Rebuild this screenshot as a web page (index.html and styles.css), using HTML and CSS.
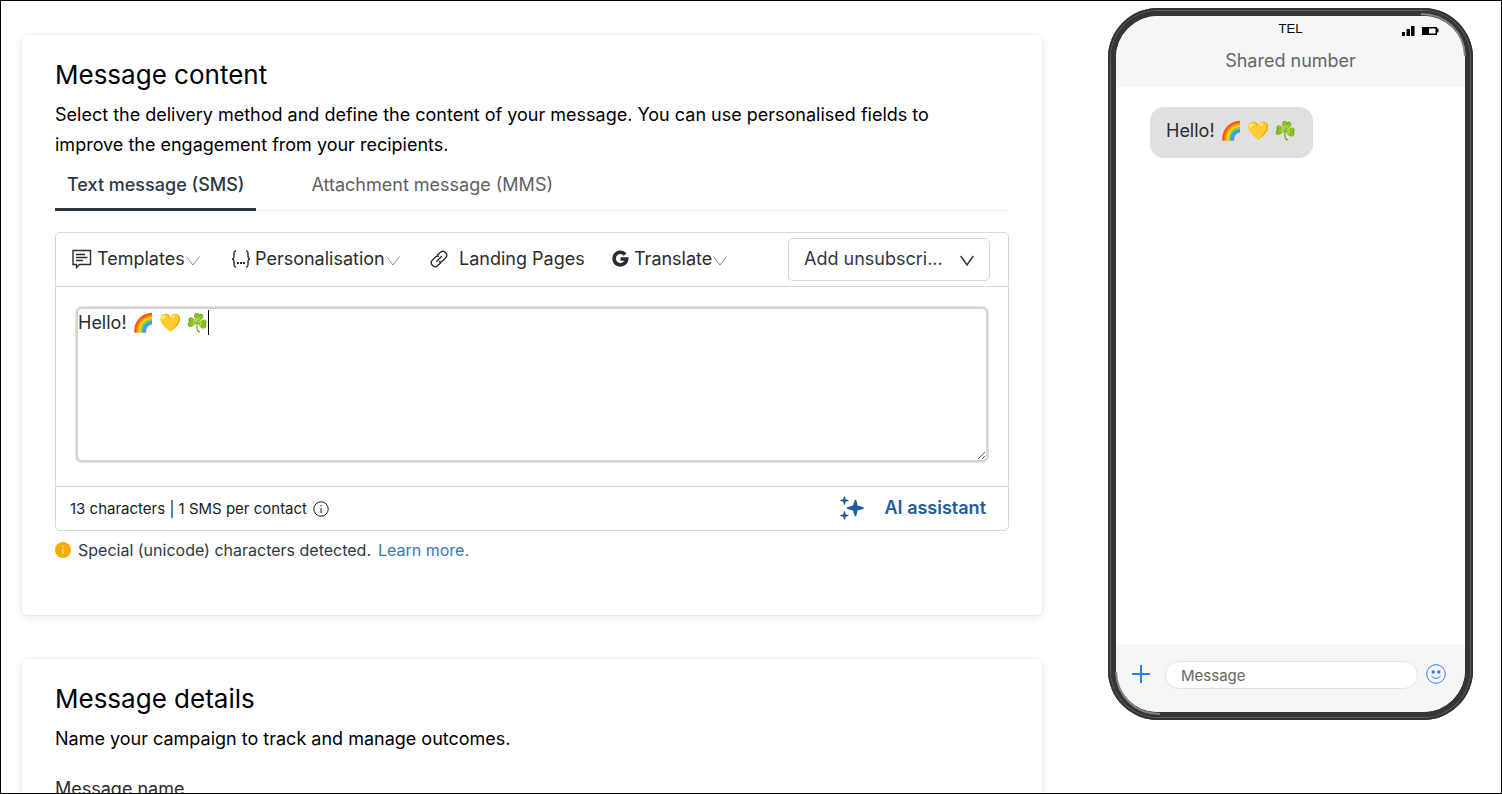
FILE: index.html
```html
<!DOCTYPE html>
<html lang="en">
<head>
<meta charset="utf-8">
<title>Message content</title>
<link rel="stylesheet" href="styles.css">
</head>
<body>
<div class="page">
  <main class="column">
    <section class="card">
      <h2 class="card-title">Message content</h2>
      <p class="card-text">Select the delivery method and define the content of your message. You can use personalised fields to improve the engagement from your recipients.</p>
      <div class="tabs" role="tablist">
        <button class="tab tab-active" role="tab" aria-selected="true">Text message (SMS)</button>
        <button class="tab" role="tab" aria-selected="false">Attachment message (MMS)</button>
      </div>
      <div class="editor">
        <div class="toolbar">
          <button class="tool">
            <svg class="icon-template" width="20" height="20" viewBox="0 0 20 20"><path d="M1 1.500H18.500V15.500H7.500L4.500 18.500V15.500H1Z M4 5.500H13 M4 8.500H15.500 M4 11.500H11"/></svg>
            <span>Templates</span>
            <svg class="chevron" width="14" height="10" viewBox="0 0 14 10"><path d="M.5 .5L7 9L13.500 .5"/></svg>
          </button>
          <button class="tool">
            <svg class="icon-braces" width="18" height="18" viewBox="0 0 18 18"><path d="M4 1C2 1 2 2 2 4V6.500C2 8 1.500 8.500 .5 9C1.500 9.500 2 10 2 11.500V14C2 16 2 17 4 17 M14 1C16 1 16 2 16 4V6.500C16 8 16.500 8.500 17.500 9C16.500 9.500 16 10 16 11.500V14C16 16 16 17 14 17"/><path class="dots" d="M5 12h2v2H5z M8 12h2v2H8z M11 12h2v2h-2z"/></svg>
            <span>Personalisation</span>
            <svg class="chevron" width="14" height="10" viewBox="0 0 14 10"><path d="M.5 .5L7 9L13.500 .5"/></svg>
          </button>
          <button class="tool tool-link">
            <svg class="icon-link" width="18" height="18" viewBox="0 0 18 18"><path d="M7 5.500L10.500 2.300C14-.8 19 4.500 15.500 8L12.500 11C11.500 12 10 12 9 11.500 M11 12.500L7.500 15.700C4 18.800-1 13.500 2.500 10L5.500 7C6.500 6 8 6 9 6.500 M6.300 11.700L11.700 6.300"/></svg>
            <span>Landing Pages</span>
          </button>
          <button class="tool">
            <svg class="icon-g" width="17" height="18" viewBox="0 0 17 18"><path d="M13.200 4.500A6.300 6.300 0 1 0 14.700 9H8.500"/></svg>
            <span>Translate</span>
            <svg class="chevron" width="14" height="10" viewBox="0 0 14 10"><path d="M.5 .5L7 9L13.500 .5"/></svg>
          </button>
          <div class="select-wrap">
            <select class="select" aria-label="Add unsubscribe"><option>Add unsubscri...</option></select>
            <svg class="select-arrow" width="14" height="12" viewBox="0 0 14 12"><path d="M.8 1L7 10L13.200 1"/></svg>
          </div>
        </div>
        <div class="compose">
          <textarea class="message" aria-label="Message text" spellcheck="false">Hello! 🌈 💛 ☘️</textarea>
          <span class="caret"></span>
        </div>
        <div class="editor-foot">
          <div class="count">
            <span>13 characters | 1 SMS per contact</span>
            <svg class="icon-info" width="16" height="16" viewBox="0 0 16 16"><circle cx="8" cy="8" r="7.200"/><path d="M8 7V12 M8 4V5.500"/></svg>
          </div>
          <button class="assistant">
            <svg width="24" height="24" viewBox="0 0 24 24"><path d="M15.500 3.500Q16.800 4 17.500 9.500Q24 11 24 12Q24 13 17.500 14.500Q16.500 20.500 15.500 20.500Q14.500 20.500 13 14.500Q6.500 13 6.500 12Q6.500 11 13 9.500Q14.500 3.500 15.500 3.500Z M4.500 0Q5.500 2 5.800 3.200Q9 4 9 4.500Q9 5 5.800 5.800Q5 9 4.500 9Q4 9 3.200 5.800Q0 5 0 4.500Q0 4 3.200 3.200Q4 0 4.500 0Z M4.500 15Q5 15 5.800 18.200Q9 19 9 19.500Q9 20 5.800 20.800Q5 24 4.500 24Q4 24 3.200 20.800Q0 20 0 19.500Q0 19 3.200 18.200Q4 15 4.500 15Z"/></svg>
            <span>AI assistant</span>
          </button>
        </div>
      </div>
      <p class="notice">
        <svg width="16" height="16" viewBox="0 0 16 16"><circle cx="8" cy="8" r="8"/><path d="M8 7V12 M8 4V5.500"/></svg>
        <span>Special (unicode) characters detected.</span>
        <a class="link" href="#">Learn more.</a>
      </p>
    </section>
    <section class="card card-details">
      <h2 class="card-title">Message details</h2>
      <p class="card-text">Name your campaign to track and manage outcomes.</p>
      <label class="field-label" for="message-name">Message name</label>
      <input class="field" id="message-name" type="text">
    </section>
  </main>
  <aside class="phone">
    <div class="screen">
      <header class="phone-head">
        <div class="status">
          <span class="carrier">TEL</span>
          <svg class="signal" width="38" height="12" viewBox="0 0 38 12"><path d="M0 7h3v4H0z M4.500 4h3.500v7H4.500z M9 1h3.500v10H9z M20 2h15v1.500h1.500v4H35v2.500H20z M27 3.500v5h6.500v-5z" fill-rule="evenodd"/></svg>
        </div>
        <div class="sender">Shared number</div>
      </header>
      <div class="thread"><p class="bubble">Hello! 🌈 💛 ☘️</p></div>
      <footer class="phone-foot">
        <svg class="plus" width="18" height="18" viewBox="0 0 18 18"><path d="M9 0V18 M0 9H18"/></svg>
        <input class="phone-input" type="text" placeholder="Message" aria-label="Message">
        <svg class="smile" width="20" height="20" viewBox="0 0 20 20"><circle cx="10" cy="10" r="9.300"/><path d="M5.500 12Q10 17 14.500 12"/><circle class="eye" cx="7.200" cy="8" r="1.700"/><circle class="eye" cx="12.800" cy="8" r="1.700"/></svg>
      </footer>
    </div>
    <svg class="gloss gloss-top" width="48" height="48" viewBox="0 0 48 48"><path d="M0 2C25 2 43 20 44 44"/></svg>
    <svg class="gloss gloss-bottom" width="48" height="48" viewBox="0 0 48 48"><path d="M48 46C23 46 5 28 4 4"/></svg>
  </aside>
</div>
</body>
</html>
```
FILE: styles.css
```css
* { box-sizing: border-box; }
body { margin: 0; font-family: Inter, "Noto Sans", sans-serif; font-size: 18px; color: #2c2c2c; background: #fff; }
button, select, textarea, input { font: inherit; color: inherit; }
svg { flex: none; fill: none; stroke: currentColor; }
p, h2 { margin: 0; }
.page { display: flex; gap: 66px; height: 100vh; overflow: hidden; border: 1px solid #000; padding: 0 28px 0 21px; }
.column { flex: 1; min-width: 0; padding-top: 34px; }
.card { height: 580px; padding: 20px 33px; border-radius: 5px; background: #fff; box-shadow: 0 0 2px #0000001f, 0 2px 10px #00000017; }
.card-details { margin-top: 44px; }
.card-title { margin-bottom: 5px; font-size: 26px; line-height: 40px; font-weight: 400; color: #000; }
.card-text { max-width: 920px; line-height: 30px; color: #000; }
.tabs { display: flex; gap: 43px; border-bottom: 1px solid #ececec; }
.tab { height: 51px; margin-bottom: -1px; padding: 0 12px; border: 0; border-bottom: 3px solid transparent; background: none; color: #5f5f5f; }
.tab-active { color: #2f3744; font-weight: 500; border-color: #2f3744; }
.editor { margin-top: 21px; }
.toolbar { display: grid; grid-template-columns: 160px 198px 182px 1fr 202px; align-items: center; height: 55px; padding: 0 18px 0 16px; border: 1px solid #d8d8d8; border-radius: 5px 5px 0 0; }
.tool { display: flex; align-items: center; gap: 5px; height: 28px; padding: 0 0 2px; border: 0; background: none; line-height: 26px; white-space: nowrap; }
.tool-link { gap: 11px; }
.chevron { margin: 4px 0 0 -4px; color: #8c8c8c; }
.icon-template { stroke-width: 1.4; }
.icon-braces, .icon-link { stroke-width: 1.4; }
.dots { fill: currentColor; stroke: none; }
.icon-g { stroke-width: 3.600; }
.select-wrap { position: relative; color: #2f3744; }
.select { width: 100%; height: 43px; padding: 0 40px 2px 15px; border: 1px solid #d8d8d8; border-radius: 5px; background: #fff; appearance: none; }
.select-arrow { position: absolute; right: 16px; top: 17px; pointer-events: none; stroke-width: 1.5; }
.compose { position: relative; padding: 20px 20px 24px; border: solid #d8d8d8; border-width: 0 1px; }
.message { display: block; width: 100%; height: 155px; padding: 0; border: 2px solid #d4d4d4; border-radius: 6px; box-shadow: 0 0 0 1px #e2e2e2; line-height: 27px; outline: 0; resize: vertical; }
.caret { position: absolute; top: 23px; left: 152px; width: 1px; height: 25px; background: #000; }
.editor-foot { display: flex; align-items: center; justify-content: space-between; height: 45px; padding: 0 22px 0 14px; border: 1px solid #d8d8d8; border-radius: 0 0 5px 5px; }
.count { display: flex; align-items: center; gap: 6px; font-size: 15px; color: #1c1c1c; }
.assistant { display: flex; align-items: center; gap: 21px; padding: 0 0 2px; border: 0; background: none; color: #225e9c; font-weight: 600; }
.assistant svg { fill: currentColor; stroke: none; }
.notice { display: flex; align-items: center; gap: 7px; margin-top: 7px; font-size: 16px; line-height: 24px; color: #2f3744; }
.notice svg { color: #fff; }
.notice circle { fill: #f5ab00; stroke: none; }
.link { color: #337ab7; text-decoration: none; }
.field-label { display: block; margin-top: 20px; line-height: 30px; }
.field { width: 100%; height: 43px; border: 1px solid #d8d8d8; border-radius: 5px; }
.phone { position: relative; flex: none; align-self: flex-start; width: 365px; margin-top: 7px; padding: 3px; border-radius: 50px; background: #353535; box-shadow: inset 0 0 0 2px #333, inset 0 0 0 3px #606060; }
.screen { display: flex; flex-direction: column; height: 706px; border: 5px solid #353535; border-radius: 47px; overflow: hidden; background: #fff; }
.phone-head { height: 71px; background: #f6f6f6; text-align: center; }
.status { position: relative; height: 30px; padding-top: 5px; font: 13px/16px "Liberation Sans", sans-serif; color: #000; }
.signal { position: absolute; right: 25px; top: 9px; fill: #000; stroke: none; }
.sender { line-height: 30px; color: #666; }
.thread { flex: 1; padding: 20px 34px; }
.bubble { width: max-content; padding: 11px 17px 14px 16px; border-radius: 14px; background: #e0e0e0; line-height: 26px; }
.phone-foot { display: flex; align-items: flex-start; gap: 8px; height: 68px; padding: 17px 19px 0 16px; background: #f6f6f6; color: #2f7df6; }
.plus { margin: 4px 7px 0 0; stroke-width: 2; }
.phone-input { flex: 1; min-width: 0; height: 28px; padding: 0 15px; border: 1px solid #e2e2e2; border-radius: 14px; background: #fff; font-size: 15px; }
.phone-input::placeholder { color: #666; opacity: 1; }
.smile { margin-top: 3px; }
.eye { fill: currentColor; stroke: none; }
.gloss { position: absolute; color: #858585; stroke-width: 2; pointer-events: none; }
.gloss-top { top: 4px; right: 4px; }
.gloss-bottom { bottom: 4px; left: 4px; }
```
